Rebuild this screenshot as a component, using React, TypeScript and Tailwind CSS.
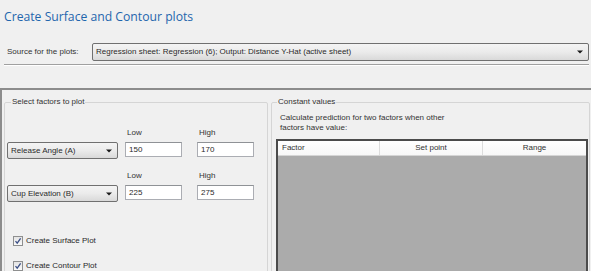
import React from "react"

const sans = { fontFamily: '"Liberation Sans", Arial, sans-serif' }

function Arrow() {
  return (
    <svg width="6" height="4" viewBox="0 0 6 4" className="shrink-0">
      <path d="M0 0.5 L6 0.5 L3 3.5 Z" fill="#1a1a1a" />
    </svg>
  )
}

function Combo({ text, className }: { text: string; className: string }) {
  return (
    <div
      className={
        "flex items-center justify-between border border-[#707070] rounded-[2px] bg-gradient-to-b from-[#f4f4f4] via-[#ebebeb] to-[#d9d9d9] pl-[3px] pr-[5px] text-[#2a2a2a] " +
        className
      }
    >
      <span className="whitespace-nowrap leading-none">{text}</span>
      <Arrow />
    </div>
  )
}

function Field({ label, value }: { label: string; value: string }) {
  return (
    <div className="flex flex-col">
      <span className="h-[10px] leading-[10px] pl-[2px] text-[#333]">{label}</span>
      <div className="mt-[4px] h-[15px] w-[57px] bg-white border border-[#abadb3] border-t-[#8f9296] flex items-center pl-[3px] leading-none text-[#2a2a2a]">
        {value}
      </div>
    </div>
  )
}

function FactorRow({ name, low, high }: { name: string; low: string; high: string }) {
  return (
    <div className="flex items-end">
      <Combo text={name} className="ml-[2px] w-[111px] h-[17px] mb-[-2px]" />
      <div className="ml-[7px]">
        <Field label="Low" value={low} />
      </div>
      <div className="ml-[15px]">
        <Field label="High" value={high} />
      </div>
    </div>
  )
}

function Check({ label }: { label: string }) {
  return (
    <div className="flex items-center h-[10px] pl-[8px]">
      <div className="w-[10px] h-[10px] border border-[#8e8f8f] bg-gradient-to-b from-[#e4e4e4] to-[#fafafa] flex items-center justify-center">
        <svg width="8" height="8" viewBox="0 0 8 8">
          <path d="M1.5 4.2 L3.2 6.2 L6.6 1.4" stroke="#3b4f86" strokeWidth="1.3" fill="none" />
        </svg>
      </div>
      <span className="ml-[3px] leading-none text-[#2a2a2a]">{label}</span>
    </div>
  )
}

export default function App() {
  return (
    <div className="w-[591px] h-[271px] overflow-hidden bg-[#f0f0f0] text-[8px] text-black flex flex-col" style={sans}>
      <div className="h-[43px] shrink-0 pl-[4px] pt-[9px]">
        <h1
          className="text-[12.2px] leading-[16px] text-[#1f66ad]"
          style={{ fontFamily: '"Open Sans", "Noto Sans", sans-serif' }}
        >
          Create Surface and Contour plots
        </h1>
      </div>

      <div className="flex items-center h-[18px] shrink-0 pl-[7px] pr-[2px]">
        <span className="w-[85px] shrink-0 text-[#333]">Source for the plots:</span>
        <Combo
          text="Regression sheet: Regression (6); Output: Distance Y-Hat (active sheet)"
          className="flex-1 h-[18px]"
        />
      </div>

      <div className="mt-[3px] ml-[4px] mr-[2px] h-[2px] shrink-0 border-t border-[#a0a0a0] border-b border-b-white" />

      <div className="mt-[22px] flex-1 border-t-2 border-l-2 border-[#8c8c8c] flex">
        <fieldset className="ml-[2px] mt-[7px] w-[264px] h-[300px] border border-[#d5d5d5] rounded-[2px] shrink-0">
          <legend className="ml-[6px] px-[1px] leading-[10px] text-[#333]">Select factors to plot</legend>
          <div className="pt-[21px] flex flex-col gap-[14px]">
            <FactorRow name="Release Angle (A)" low="150" high="170" />
            <FactorRow name="Cup Elevation (B)" low="225" high="275" />
          </div>
          <div className="mt-[36px] flex flex-col gap-[15px]">
            <Check label="Create Surface Plot" />
            <Check label="Create Contour Plot" />
          </div>
        </fieldset>

        <fieldset className="ml-[3px] mt-[7px] flex-1 mr-[1px] h-[300px] border border-[#d5d5d5] rounded-[2px]">
          <legend className="ml-[5px] px-[1px] leading-[10px] text-[#333]">Constant values</legend>
          <p className="pt-[6px] pl-[8px] leading-[10px] text-[#333]">
            Calculate prediction for two factors when other
            <br />
            factors have value:
          </p>
          <div className="mt-[6px] ml-[4px] w-[312px] h-[200px] border-2 border-[#4b4b4b] bg-[#ababab] flex flex-col">
            <div className="h-[15px] flex bg-gradient-to-b from-white to-[#f7f7f7] border-b border-[#d5d5d5] text-[#333]">
              <div className="w-[102px] border-r border-[#dcdcdc] flex items-center pl-[4px]">Factor</div>
              <div className="w-[103px] border-r border-[#dcdcdc] flex items-center justify-center">Set point</div>
              <div className="flex-1 flex items-center justify-center">Range</div>
            </div>
          </div>
        </fieldset>
      </div>
    </div>
  )
}
